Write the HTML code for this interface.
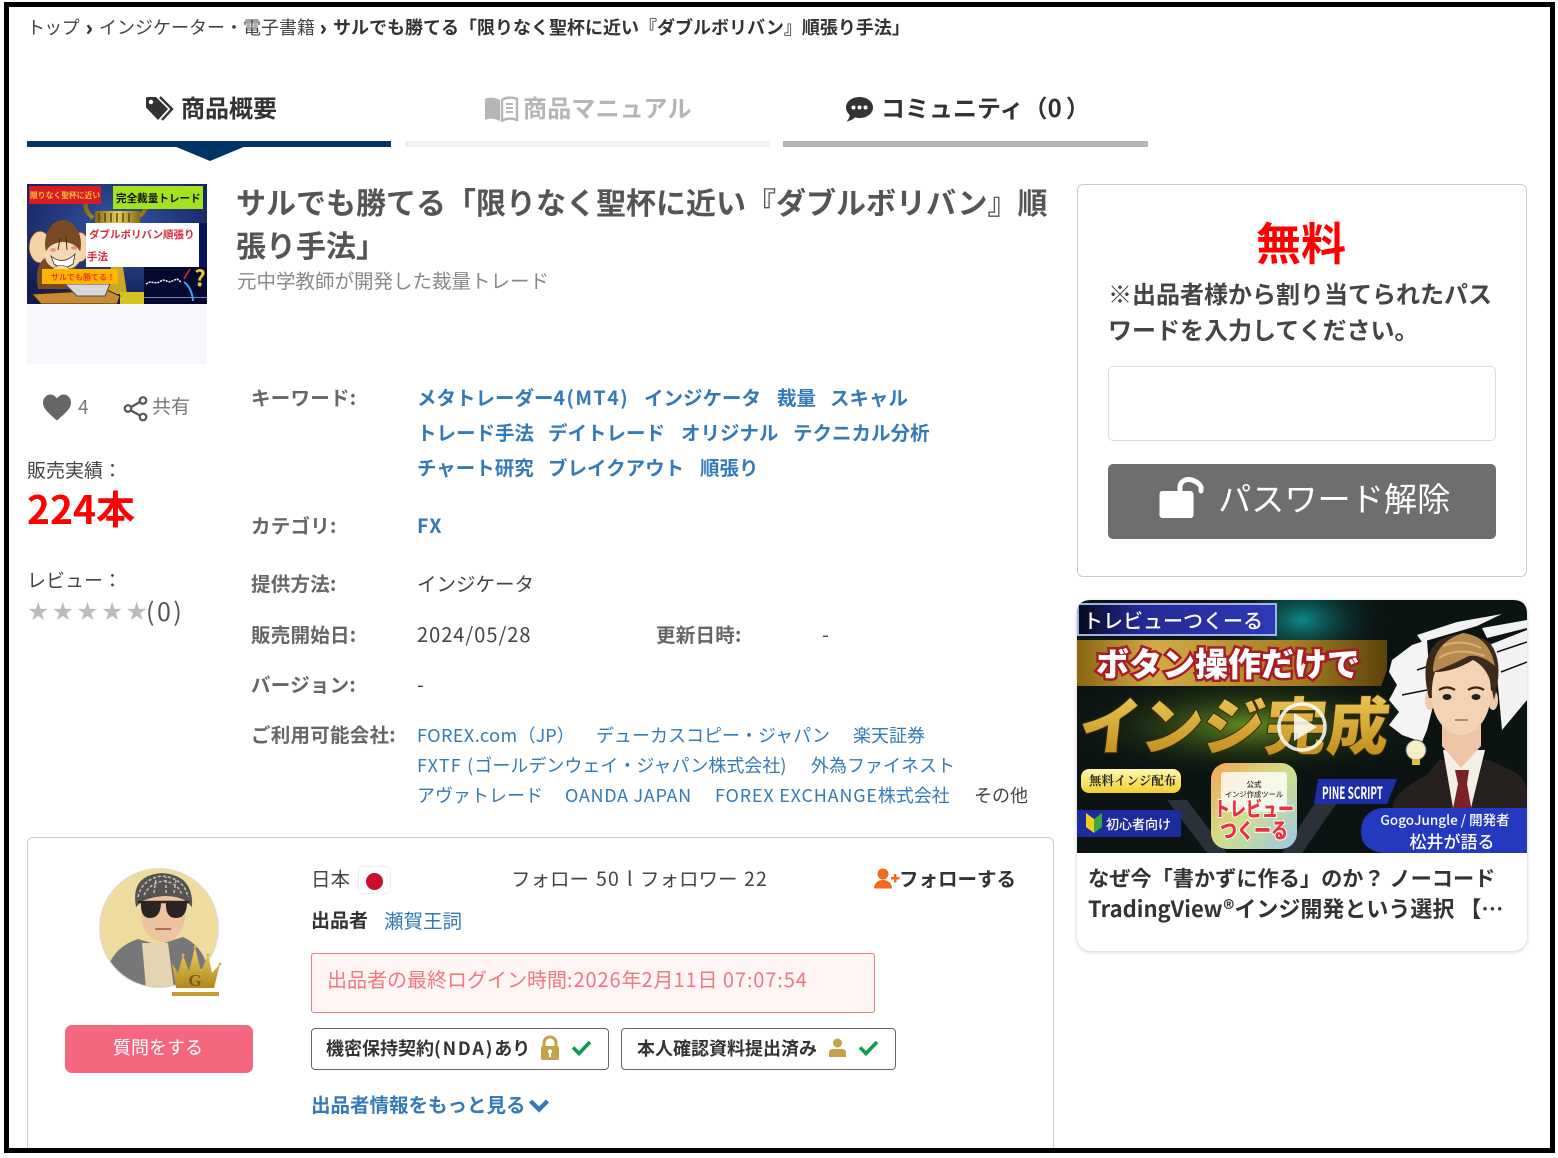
<!DOCTYPE html>
<html lang="ja"><head><meta charset="utf-8"><title>サルでも勝てる</title>
<style>
html,body{margin:0;padding:0;background:#fff}
#p{position:relative;width:1558px;height:1158px;overflow:hidden;background:#fff;font-family:"Noto Sans CJK JP","Liberation Sans",sans-serif;color:#333}
.t{position:absolute;white-space:nowrap;line-height:1}
.b{position:absolute}
.l{color:#666;font-weight:700;font-size:19.5px;letter-spacing:.25px}
.k{color:#337ab7;font-weight:700;font-size:19.5px}
.c{color:#337ab7;font-size:18px}
.ch{font-size:20px;font-weight:700;color:#333;-webkit-text-stroke:.7px #333}
svg{position:absolute;display:block}
</style></head><body><div id="p">

<div class="t" style="left:27px;top:18px;font-size:18px;color:#444"><span style="letter-spacing:-.7px">トップ</span></div>
<div class="t ch" style="left:86px;top:17px">›</div>
<div class="t" style="left:99px;top:18px;font-size:18px;color:#444">インジケーター・電子書籍</div>
<div class="t ch" style="left:320px;top:17px">›</div>
<div class="t" style="left:333px;top:18px;font-size:18px;font-weight:700;color:#333">サルでも勝てる「限りなく聖杯に近い『ダブルボリバン』順張り手法」</div>

<svg style="left:145px;top:96px" width="30" height="26" viewBox="0 0 30 26"><path d="M1 2.5C1 1.5 1.7 1 2.5 1H11L23 13 13 24 1 11.5Z" fill="#333"/><circle cx="6" cy="6" r="2.2" fill="#fff"/><path d="M15 1 L27 13 17 24" fill="none" stroke="#333" stroke-width="2.4"/></svg>
<div class="t" style="left:181px;top:95px;font-size:24px;font-weight:700;color:#333">商品概要</div>
<svg style="left:484px;top:96px" width="36" height="26" viewBox="0 0 36 26"><path d="M1 3C5 1 10 1 16 4V25C10 22 5 22 1 24Z" fill="#b5b5b5"/><path d="M18 4C22 1 28 1 33 3V24C28 22 22 22 18 25Z" fill="none" stroke="#b5b5b5" stroke-width="2.4"/><path d="M22 8H29M22 12H29M22 16H29" stroke="#b5b5b5" stroke-width="2"/></svg>
<div class="t" style="left:523px;top:95px;font-size:24px;font-weight:700;color:#b5b5b5;letter-spacing:.2px">商品マニュアル</div>
<svg style="left:845px;top:96px" width="30" height="28" viewBox="0 0 30 28"><path d="M14.5 1C22 1 28 5.5 28 11.5S22 22 14.5 22C13 22 11.5 21.8 10 21.4 8 23.5 5 25 1.5 25.5 3.5 23.5 4.5 21.5 4.8 19 2.5 17 1 14.5 1 11.5 1 5.5 7 1 14.5 1Z" fill="#333"/><circle cx="8.5" cy="11.5" r="2" fill="#fff"/><circle cx="14.5" cy="11.5" r="2" fill="#fff"/><circle cx="20.5" cy="11.5" r="2" fill="#fff"/></svg>
<div class="t" style="left:881px;top:95px;font-size:24px;font-weight:700;color:#333">コミュニティ（<span style="letter-spacing:4px">0</span>）</div>

<div class="b" style="left:27px;top:141px;width:364px;height:6px;background:#003366"></div>
<svg style="left:174px;top:146px" width="72" height="16"><path d="M0 0H72L36 15Z" fill="#003366"/></svg>
<div class="b" style="left:405px;top:141px;width:365px;height:6px;background:#f0f0f0"></div>
<div class="b" style="left:783px;top:141px;width:365px;height:6px;background:#b5b5b5"></div>

<div class="b" style="left:27px;top:304px;width:180px;height:60px;background:#f5f7fa"></div>
<svg style="left:27px;top:184px" width="180" height="120" viewBox="0 0 180 120">
<defs><radialGradient id="tb" cx="50%" cy="35%" r="70%"><stop offset="0" stop-color="#3558a8"/><stop offset="1" stop-color="#121a52"/></radialGradient><linearGradient id="gd" x1="0" x2="1"><stop offset="0" stop-color="#8a6a10"/><stop offset=".5" stop-color="#e8cc55"/><stop offset="1" stop-color="#8a6a10"/></linearGradient></defs>
<rect width="180" height="120" fill="url(#tb)"/>
<rect x="117" y="39" width="63" height="81" fill="#0a1560"/>
<rect x="117" y="83" width="63" height="37" fill="#05092f"/>
<path d="M119 100 L123 98 L130 99 L136 96 L143 98 L150 95 L154 98" stroke="#fff" stroke-width="1.5" fill="none" stroke-dasharray="2 1"/>
<path d="M163 85 L157 95" stroke="#e22" stroke-width="1.5"/><path d="M157 98 Q165 104 166 117" stroke="#3fa9f5" stroke-width="2" fill="none"/>
<text x="173" y="102" font-size="22" font-weight="700" fill="#e8c93a" text-anchor="middle">?</text>
<rect x="117" y="113" width="63" height="1" fill="#7a86c2"/>
<path d="M60 16Q55 25 66 34M118 14Q124 24 110 34" fill="none" stroke="url(#gd)" stroke-width="4"/>
<rect x="68" y="27" width="45" height="13" fill="url(#gd)"/>
<path d="M72 29V38M78 29V38M84 29V38M90 29V38M96 29V38M102 29V38" stroke="#5a4510" stroke-width="1.5"/>
<path d="M84 83H96L100 110H78Z" fill="#c9a82a"/><rect x="93" y="108" width="24" height="12" fill="#d4c321"/>
<ellipse cx="13" cy="63" rx="11" ry="16" fill="#f3d3a8" stroke="#6b3a1c"/>
<ellipse cx="53" cy="63" rx="9" ry="15" fill="#f3d3a8" stroke="#6b3a1c"/>
<path d="M11 105Q6 78 22 72H48L50 105Z" fill="#7a4a22"/>
<ellipse cx="36" cy="60" rx="18" ry="24" fill="#7a4a22"/>
<ellipse cx="36" cy="72" rx="18" ry="14" fill="#f5d9b5"/>
<path d="M24 72Q36 82 48 70L46 80Q36 87 27 80Z" fill="#fff" stroke="#333" stroke-width=".8"/>
<path d="M33 54L31 66M39 52L40 66" stroke="#4a2a10" stroke-width="1" fill="none"/>
<ellipse cx="26" cy="66" rx="3" ry="2" fill="#f09090"/><ellipse cx="47" cy="64" rx="3" ry="2" fill="#f09090"/>
<path d="M26 84Q36 78 44 86L42 98H30Z" fill="#f5d9b5" stroke="#555" stroke-width=".6"/>
<path d="M5 110L80 106 93 112 90 120H14Z" fill="#c88a35" stroke="#3a2510"/>
<path d="M38 100H83L78 112H50Z" fill="#d8d8d8" stroke="#555"/>
<rect x="15" y="85" width="76" height="15" fill="#ffb400"/>
<text x="24" y="96" font-size="8" font-weight="700" fill="#e8421c">サルでも勝てる！</text>
<rect x="2" y="2" width="72" height="18" fill="#d91b24"/>
<text x="3" y="14" font-size="7.8" font-weight="700" fill="#f4c23a">限りなく聖杯に近い</text>
<rect x="86" y="2" width="90" height="23" fill="#a4e21f"/>
<text x="89" y="18" font-size="10.6" font-weight="700" fill="#111">完全裁量トレード</text>
<rect x="59" y="39" width="113" height="44" fill="#fff"/>
<text x="62" y="54" font-size="10.5" font-weight="700" fill="#d92b3f">ダブルボリバン順張り</text>
<text x="60" y="76" font-size="10.5" font-weight="700" fill="#d92b3f">手法</text>
</svg>

<svg style="left:42px;top:393px" width="30" height="28" viewBox="0 0 30 28"><path d="M15 27.5C5 19 1 15 1 9.5 1 5 4.5 1.5 8.5 1.5 11 1.5 13.5 3 15 5.5 16.5 3 19 1.5 21.5 1.5 25.5 1.5 29 5 29 9.5 29 15 25 19 15 27.5Z" fill="#666"/></svg>
<div class="t" style="left:78px;top:397px;font-size:19px;color:#777">4</div>
<svg style="left:123px;top:395px" width="26" height="27" viewBox="0 0 26 27" fill="none" stroke="#555" stroke-width="2.2"><circle cx="20" cy="5.5" r="3.3"/><circle cx="5" cy="13.5" r="3.3"/><circle cx="20" cy="22" r="3.3"/><path d="M8 12L17 7M8 15.5L17 20.5"/></svg>
<div class="t" style="left:152px;top:396px;font-size:19px;color:#777">共有</div>

<div class="t" style="left:27px;top:460px;font-size:19px;color:#444">販売実績：</div>
<div class="t" style="left:27px;top:489px;font-size:39px;font-weight:700;color:#f00">224本</div>
<div class="t" style="left:27px;top:570px;font-size:19px;color:#444">レビュー：</div>
<div class="t" style="left:27px;top:599px;font-size:25px;color:#bbb;letter-spacing:2.2px;font-family:'DejaVu Sans',sans-serif">★★★★★</div>
<div class="t" style="left:146px;top:599px;font-size:25px;color:#555;letter-spacing:2.5px">(0)</div>

<div class="t" style="left:236px;top:186px;font-size:30px;font-weight:700;color:#555">サルでも勝てる「限りなく聖杯に近い『ダブルボリバン』順</div>
<div class="t" style="left:236px;top:229px;font-size:30px;font-weight:700;color:#555">張り手法」</div>
<div class="t" style="left:237px;top:270px;font-size:19.5px;color:#888">元中学教師が開発した裁量トレード</div>

<div class="t l" style="left:251px;top:387px">キーワード:</div>
<div class="t k" style="left:417px;top:387px">メタトレーダー<span style="letter-spacing:1.5px">4(MT4)</span></div>
<div class="t k" style="left:644px;top:387px">インジケータ</div>
<div class="t k" style="left:777px;top:387px">裁量</div>
<div class="t k" style="left:830px;top:387px">スキャル</div>
<div class="t k" style="left:417px;top:422px">トレード手法</div>
<div class="t k" style="left:548px;top:422px">デイトレード</div>
<div class="t k" style="left:681px;top:422px">オリジナル</div>
<div class="t k" style="left:793px;top:422px">テクニカル分析</div>
<div class="t k" style="left:417px;top:457px">チャート研究</div>
<div class="t k" style="left:548px;top:457px">ブレイクアウト</div>
<div class="t k" style="left:700px;top:457px">順張り</div>

<div class="t l" style="left:251px;top:515px">カテゴリ:</div>
<div class="t k" style="left:417px;top:515px;letter-spacing:1.5px">FX</div>
<div class="t l" style="left:251px;top:573px">提供方法:</div>
<div class="t" style="left:417px;top:573px;font-size:19.5px;color:#444">インジケータ</div>
<div class="t l" style="left:251px;top:624px">販売開始日:</div>
<div class="t" style="left:417px;top:624px;font-size:20px;color:#444;letter-spacing:1px">2024/05/28</div>
<div class="t l" style="left:656px;top:624px">更新日時:</div>
<div class="t" style="left:822px;top:624px;font-size:20px;color:#444">-</div>
<div class="t l" style="left:251px;top:674px">バージョン:</div>
<div class="t" style="left:417px;top:674px;font-size:20px;color:#444">-</div>
<div class="t l" style="left:251px;top:724px">ご利用可能会社:</div>
<div class="t c" style="left:417px;top:726px"><span style="letter-spacing:.45px">FOREX.com</span>（JP）</div>
<div class="t c" style="left:596px;top:726px">デューカスコピー・ジャパン</div>
<div class="t c" style="left:853px;top:726px">楽天証券</div>
<div class="t c" style="left:417px;top:756px"><span style="letter-spacing:1.2px">FXTF (</span>ゴールデンウェイ・ジャパン株式会社<span style="letter-spacing:1px">)</span></div>
<div class="t c" style="left:811px;top:756px">外為ファイネスト</div>
<div class="t c" style="left:417px;top:786px">アヴァトレード</div>
<div class="t c" style="left:565px;top:786px;letter-spacing:.7px">OANDA JAPAN</div>
<div class="t c" style="left:715px;top:786px"><span style="letter-spacing:.8px">FOREX EXCHANGE</span>株式会社</div>
<div class="t" style="left:974px;top:786px;font-size:18px;color:#444">その他</div>

<div class="b" style="left:1077px;top:184px;width:448px;height:391px;border:1px solid #ccc;border-radius:6px"></div>
<div class="t" style="left:1256px;top:218px;font-size:45px;font-weight:700;color:#f00">無料</div>
<div class="t" style="left:1108px;top:275px;font-size:24px;font-weight:700;color:#444;line-height:36px;white-space:normal;width:396px">※出品者様から割り当てられたパスワードを入力してください。</div>
<div class="b" style="left:1108px;top:366px;width:386px;height:73px;border:1px solid #ddd;border-radius:5px"></div>
<div class="b" style="left:1108px;top:464px;width:388px;height:75px;background:#6e6e6e;border-radius:5px"></div>
<svg style="left:1158px;top:477px" width="48" height="42" viewBox="0 0 48 42"><path d="M4 14H32C34 14 35.5 15.5 35.5 17.5V38C35.5 40 34 41 32 41H5C3 41 1.5 40 1.5 38V17.5C1.5 15.5 2.5 14 4 14Z" fill="#fff"/><path d="M22 14V10C22 5.5 26 2.5 30.5 2.5S41 5.5 43 10V14" fill="none" stroke="#fff" stroke-width="5" stroke-linecap="round"/></svg>
<div class="t" style="left:1218px;top:480px;font-size:33.2px;color:#fff">パスワード解除</div>

<div class="b" style="left:1077px;top:600px;width:450px;height:351px;border-radius:14px;background:#fff;box-shadow:0 1px 4px rgba(0,0,0,.2)"></div>
<svg style="left:1077px;top:600px" width="450" height="253" viewBox="0 0 450 253">
<defs>
<clipPath id="ac"><path d="M14 0H436Q450 0 450 14V253H0V14Q0 0 14 0Z"/></clipPath>
<linearGradient id="g1" x1="0" x2="1"><stop offset="0" stop-color="#8a6512"/><stop offset=".25" stop-color="#d1ab45"/><stop offset=".7" stop-color="#a77f20"/><stop offset="1" stop-color="#5d430c"/></linearGradient>
<linearGradient id="g2" x1="0" x2="0" y1="0" y2="1"><stop offset="0" stop-color="#f5d664"/><stop offset="1" stop-color="#bb8412"/></linearGradient>
<radialGradient id="g3"><stop offset="0" stop-color="#6c9a20" stop-opacity=".9"/><stop offset="1" stop-color="#0a120c" stop-opacity="0"/></radialGradient>
<radialGradient id="g4"><stop offset="0" stop-color="#0e8a8a"/><stop offset="1" stop-color="#0a120c" stop-opacity="0"/></radialGradient>
<linearGradient id="g5" x1="0" y1="0" x2="1" y2="1"><stop offset="0" stop-color="#f7a552"/><stop offset=".5" stop-color="#cfe08a"/><stop offset="1" stop-color="#9ac7e8"/></linearGradient>
<linearGradient id="g6" x1="0" x2="1"><stop offset="0" stop-color="#05091f"/><stop offset=".3" stop-color="#222a90"/><stop offset="1" stop-color="#2f38b8"/></linearGradient>
<linearGradient id="g7" x1="0" x2="0" y1="0" y2="1"><stop offset="0" stop-color="#fff7b0"/><stop offset="1" stop-color="#f3cf2e"/></linearGradient>
</defs>
<g clip-path="url(#ac)">
<rect width="450" height="253" fill="#0b1412"/>
<ellipse cx="225" cy="20" rx="90" ry="55" fill="url(#g4)"/>
<ellipse cx="170" cy="125" rx="190" ry="55" fill="url(#g3)"/>
<path d="M110 200L150 253H130L90 200ZM240 200L205 253H225L262 200Z" fill="#2b3138"/>
<path d="M315 60L335 45 350 40 355 110 350 130 345 142 325 135 312 125 322 112 312 100 320 85 312 72Z" fill="#f4f4f4"/>
<path d="M340 35L380 22 425 14 400 26 345 42ZM405 28L450 20V28L410 38ZM412 45L450 30V100L425 130 420 75Z" fill="#f2f2f2"/>
<path d="M420 52L450 42M424 72L450 62M340 70L352 66M325 95L350 90" stroke="#0b1412" stroke-width="1.5"/>
<rect x="1" y="4" width="198" height="31" fill="url(#g6)" stroke="#9fb2e8" stroke-width="2"/>
<text x="6" y="28" font-size="20" font-weight="500" fill="#fff">トレビューつくーる</text>
<path d="M0 40H310V70L304 86H0Z" fill="url(#g1)"/>
<text x="19" y="76" font-size="33" font-weight="900" fill="#fff" stroke="#a81d24" stroke-width="5" paint-order="stroke">ボタン操作だけで</text>
<text transform="translate(0 149) skewX(-6)" font-size="62" font-weight="900" fill="url(#g2)" stroke="#3a2806" stroke-width="2" paint-order="stroke">インジ完成</text>
<path d="M316 253V204Q320 190 350 175L362 160H412L438 172Q450 180 450 195V253Z" fill="#26211e"/>
<path d="M366 150L376 208H394L408 150Z" fill="#f4efe6"/>
<path d="M378 170H392L390 184 396 218H374L381 184Z" fill="#7a2226"/>
<path d="M365 115V146L384 168 404 146V115Z" fill="#eec5a4"/>
<ellipse cx="353" cy="100" rx="5" ry="10" fill="#efc9a8"/><ellipse cx="416" cy="100" rx="5" ry="10" fill="#efc9a8"/>
<ellipse cx="384" cy="92" rx="30" ry="43" fill="#f4d2b4"/>
<path d="M352 98Q342 60 360 42 385 26 412 42 428 60 417 100L413 80Q408 66 396 60 376 72 358 72 354 84 355 98Z" fill="#3b2a1a"/>
<path d="M356 68Q358 42 386 33 412 36 418 66 404 54 392 56 372 66 356 72Z" fill="#b68a4e"/>
<path d="M366 46Q384 38 404 48M362 58Q380 46 408 56" stroke="#d8b070" stroke-width="2" fill="none"/>
<path d="M362 90Q370 85 378 90M391 90Q399 85 407 90" stroke="#33231a" stroke-width="2.2" fill="none"/><ellipse cx="370" cy="97" rx="4.5" ry="3" fill="#222"/><ellipse cx="399" cy="97" rx="4.5" ry="3" fill="#222"/><path d="M378 120H391" stroke="#a56b50" stroke-width="1.5"/>
<circle cx="339" cy="150" r="10" fill="#f5efc8" stroke="#666"/><rect x="335" y="159" width="8" height="6" fill="#e0c040"/>
<rect x="4" y="169" width="100" height="24" rx="8" fill="url(#g7)"/>
<text x="12" y="185" font-size="12.5" font-weight="700" fill="#222" font-family="Noto Serif CJK SC,serif">無料インジ配布</text>
<rect x="0" y="210" width="104" height="27" fill="#1d2c9c"/>
<path d="M9 213L17 219V233L9 227Z" fill="#f0d020"/><path d="M25 213L17 219V233L25 227Z" fill="#3da83d"/>
<text x="29" y="229" font-size="13" font-weight="500" fill="#fff">初心者向け</text>
<rect x="134" y="163" width="86" height="86" rx="16" fill="url(#g5)"/>
<rect x="144" y="172" width="66" height="40" rx="3" fill="#fff" opacity=".8"/>
<text x="177" y="187" font-size="7.5" font-weight="700" fill="#444" text-anchor="middle">公式</text>
<text x="177" y="197" font-size="7.3" font-weight="500" fill="#333" text-anchor="middle">インジ作成ツール</text>
<text x="177" y="216" font-size="20" font-weight="900" fill="#e8323c" stroke="#fff" stroke-width="2" paint-order="stroke" text-anchor="middle" textLength="80" lengthAdjust="spacingAndGlyphs">トレビュー</text>
<text x="177" y="238" font-size="21" font-weight="900" fill="#e8323c" stroke="#fff" stroke-width="2" paint-order="stroke" text-anchor="middle" textLength="68" lengthAdjust="spacingAndGlyphs">つくーる</text>
<path d="M241 179H320L310 204H237Z" fill="#1d2fa8"/>
<text x="245" y="199" font-size="17" font-weight="700" fill="#fff" textLength="61" lengthAdjust="spacingAndGlyphs">PINE SCRIPT</text>
<path d="M450 208V253H306Q284 250 284 232 284 212 304 208Z" fill="#2239c0"/>
<text x="368" y="225" font-size="13.5" font-weight="500" fill="#fff" text-anchor="middle">GogoJungle / 開発者</text>
<text x="375" y="248" font-size="17" font-weight="500" fill="#fff" text-anchor="middle">松井が語る</text>
<circle cx="225" cy="127" r="23" fill="none" stroke="#fff" stroke-opacity=".85" stroke-width="3.5"/>
<path d="M217 113L240 127 217 141Z" fill="#fff" fill-opacity=".85"/>
</g></svg>
<div class="t" style="left:1088px;top:863px;font-size:21.2px;font-weight:700;color:#333;line-height:30px">なぜ今「書かずに作る」のか？ ノーコード</div>
<div class="t" style="left:1088px;top:893px;font-size:22px;font-weight:700;color:#333;line-height:30px">TradingView®インジ開発という選択 【…</div>

<div class="b" style="left:27px;top:837px;width:1025px;height:330px;border:1px solid #ccc;border-radius:6px"></div>
<svg style="left:98px;top:867px" width="126" height="132" viewBox="0 0 126 132">
<defs><clipPath id="av"><circle cx="61" cy="61" r="59"/></clipPath><linearGradient id="cr" x1="0" x2="0" y1="0" y2="1"><stop offset="0" stop-color="#f0d060"/><stop offset="1" stop-color="#b08820"/></linearGradient></defs>
<circle cx="61" cy="61" r="60" fill="#ddd"/>
<g clip-path="url(#av)"><rect width="126" height="126" fill="#eedb9e"/>
<path d="M5 122Q8 82 40 72L60 78 85 70Q112 82 112 122Z" fill="#77777a"/>
<path d="M44 76H70L76 122H48Z" fill="#e3d5b2"/>
<ellipse cx="65" cy="48" rx="22" ry="27" fill="#eec3a0"/>
<path d="M38 40Q32 8 64 6 96 8 94 40L88 34Q70 24 44 34Z" fill="#555452"/>
<path d="M40 30Q44 12 64 9 86 11 90 30M46 28Q52 16 66 14 80 16 84 28M56 26L58 12M68 26L68 10M76 26L78 13" stroke="#c4c1bb" stroke-width="1.5" fill="none" stroke-dasharray="3 2"/>
<path d="M43 35H63Q63 51 52 51 42 51 43 35ZM68 35H89Q89 51 78 51 67 51 68 35Z" fill="#2a2422"/><path d="M40 35H91" stroke="#2a2422" stroke-width="2.5"/>
<path d="M57 62H73" stroke="#b8705c" stroke-width="2"/></g>
<rect x="74" y="125" width="47" height="4" fill="#c59c2c"/>
<path d="M74 96L80 106 85 88 91 104 97 80 103 104 110 88 114 106 122 97 116 121H78Z" fill="url(#cr)"/>
<circle cx="97" cy="80" r="1.5" fill="#d8b440"/><circle cx="85" cy="88" r="1.5" fill="#d8b440"/><circle cx="110" cy="88" r="1.5" fill="#d8b440"/><circle cx="122" cy="97" r="1.5" fill="#d8b440"/>
<text x="97" y="119" font-size="17" font-weight="700" fill="#7a5a10" text-anchor="middle" font-family="Liberation Serif">G</text>
</svg>
<div class="b" style="left:65px;top:1025px;width:188px;height:48px;background:#f4677f;border-radius:7px"></div>
<div class="t" style="left:113px;top:1038px;font-size:18px;color:#fff">質問をする</div>

<div class="t" style="left:311px;top:868px;font-size:19.5px;color:#444">日本</div>
<div class="b" style="left:358px;top:866px;width:31px;height:26px;border:1px solid #eee;border-radius:4px"></div>
<div class="b" style="left:366px;top:873px;width:17px;height:17px;border-radius:50%;background:#c8102e"></div>
<div class="t" style="left:511px;top:868px;font-size:19.5px;color:#444">フォロー</div>
<div class="t" style="left:596px;top:868px;font-size:19.5px;color:#444;letter-spacing:1.2px">50</div>
<div class="t" style="left:627px;top:868px;font-size:19.5px;color:#444">l</div>
<div class="t" style="left:640px;top:868px;font-size:19.5px;color:#444">フォロワー</div>
<div class="t" style="left:744px;top:868px;font-size:19.5px;color:#444;letter-spacing:1.2px">22</div>
<svg style="left:874px;top:868px" width="26" height="22" viewBox="0 0 26 22" fill="#f26a1b"><circle cx="9" cy="6" r="5.5"/><path d="M0 20.5C0 15 4 12 9 12S18 15 18 20.5Z"/><path d="M20 6H22.5V9H25.5V11.5H22.5V14.5H20V11.5H17V9H20Z"/></svg>
<div class="t" style="left:899px;top:868px;font-size:19.5px;font-weight:700;color:#333">フォローする</div>
<div class="t" style="left:311px;top:910px;font-size:19px;font-weight:700;color:#333">出品者</div>
<div class="t" style="left:384px;top:910px;font-size:19.5px;color:#337ab7">瀬賀王詞</div>
<div class="b" style="left:311px;top:953px;width:562px;height:58px;background:#fff5f5;border:1px solid #f0787f;border-radius:3px"></div>
<div class="t" style="left:327px;top:969px;font-size:20px;color:#f0787f">出品者の最終ログイン時間<span style="letter-spacing:.9px">:2026</span>年<span style="letter-spacing:.9px">2</span>月<span style="letter-spacing:.9px">11</span>日<span style="letter-spacing:.9px"> 07:07:54</span></div>

<div class="b" style="left:311px;top:1028px;width:296px;height:40px;border:1px solid #666;border-radius:4px"></div>
<div class="t" style="left:326px;top:1039px;font-size:18px;font-weight:700;color:#333">機密保持契約<span style="letter-spacing:1.8px">(NDA)</span>あり</div>
<svg style="left:540px;top:1035px" width="20" height="26" viewBox="0 0 20 26"><path d="M4 12V8C4 4.5 6.5 2 10 2S16 4.5 16 8V12" fill="none" stroke="#c5a14a" stroke-width="3"/><rect x="1" y="11" width="18" height="14" rx="2" fill="#c5a14a"/><circle cx="10" cy="16.5" r="2.2" fill="#fff"/><rect x="9" y="17" width="2" height="5" fill="#fff"/></svg>
<svg style="left:571px;top:1039px" width="21" height="17" viewBox="0 0 21 17"><path d="M2 8.5L8 14.5 19 3" fill="none" stroke="#0a9e48" stroke-width="3.6"/></svg>
<div class="b" style="left:621px;top:1028px;width:273px;height:40px;border:1px solid #666;border-radius:4px"></div>
<div class="t" style="left:637px;top:1039px;font-size:18px;font-weight:700;color:#333">本人確認資料提出済み</div>
<svg style="left:829px;top:1038px" width="17" height="19" viewBox="0 0 17 19" fill="#c5a14a"><circle cx="8.5" cy="5" r="4.5"/><path d="M0 19V15Q0 11 4 11H13Q17 11 17 15V19Z"/></svg>
<svg style="left:858px;top:1039px" width="21" height="17" viewBox="0 0 21 17"><path d="M2 8.5L8 14.5 19 3" fill="none" stroke="#0a9e48" stroke-width="3.6"/></svg>
<div class="t" style="left:311px;top:1094px;font-size:19.5px;font-weight:700;color:#337ab7">出品者情報をもっと見る</div>
<svg style="left:528px;top:1098px" width="22" height="15" viewBox="0 0 22 15"><path d="M2.5 3L11 11.5 19.5 3" fill="none" stroke="#337ab7" stroke-width="4.4"/></svg>

<div class="b" style="left:0;top:1153px;width:1558px;height:5px;background:#fff"></div>
<div class="b" style="left:4px;top:2px;width:1551px;height:1151px;box-sizing:border-box;border:5px solid #000"></div>
</div></body></html>
